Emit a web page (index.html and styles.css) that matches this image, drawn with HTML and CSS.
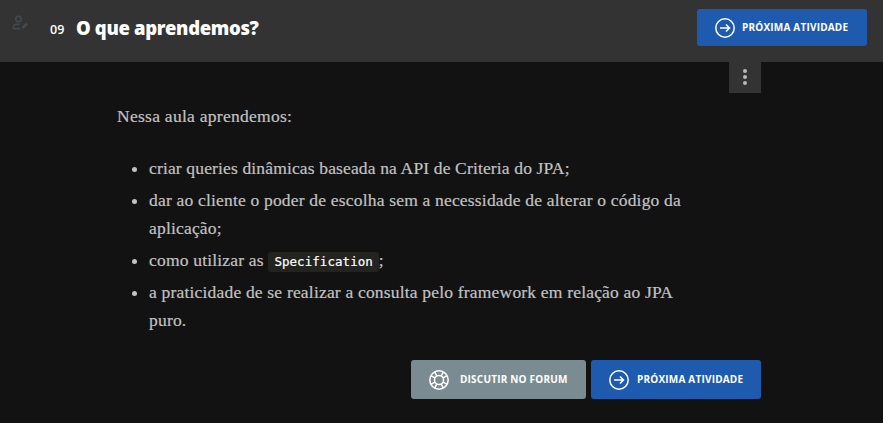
FILE: index.html
```html
<!DOCTYPE html>
<html lang="pt-BR">
<head>
<meta charset="utf-8">
<title>O que aprendemos?</title>
<link rel="stylesheet" href="styles.css">
</head>
<body>
<header class="header">
  <svg class="user-icon" viewBox="0 0 16 16" fill="none" stroke="currentColor" stroke-width="1.5"><circle cx="6" cy="4" r="2.8"/><path d="M7.5 13.7H1V12c0-1.800 1.400-2.800 3.400-2.800h3"/><path d="M9.500 13.500v-2l4-4 2 2-4 4z" fill="currentColor" stroke="none"/></svg>
  <h1 class="heading"><span class="number">09</span><span class="title">O que aprendemos?</span></h1>
  <a class="button next header-next">
    <svg class="icon" viewBox="0 0 20 20"><circle cx="10" cy="10" r="9.200"/><path d="M5 10h9.500M11 6.500l3.500 3.500-3.500 3.500"/></svg>
    <span>PRÓXIMA ATIVIDADE</span>
  </a>
</header>
<main class="content">
  <button class="more" aria-label="Mais opções"><i></i><i></i><i></i></button>
  <p class="intro">Nessa aula aprendemos:</p>
  <ul class="topics">
    <li>criar queries dinâmicas baseada na API de Criteria do JPA;</li>
    <li>dar ao cliente o poder de escolha sem a necessidade de alterar o código da<br>aplicação;</li>
    <li>como utilizar as <code>Specification</code>;</li>
    <li>a praticidade de se realizar a consulta pelo framework em relação ao JPA<br>puro.</li>
  </ul>
  <div class="actions">
    <a class="button forum">
      <svg class="icon" viewBox="0 0 20 20"><circle cx="10" cy="10" r="9.200"/><circle cx="10" cy="10" r="4.500"/><path d="M5.800 2.200l2 3.800M2.200 5.800l3.800 2M14.200 2.200l-2 3.800M17.800 5.800l-3.800 2M5.800 17.800l2-3.800M2.200 14.200l3.800-2M14.200 17.800l-2-3.800M17.800 14.200l-3.800-2"/></svg>
      <span>DISCUTIR NO FORUM</span>
    </a>
    <a class="button next">
      <svg class="icon" viewBox="0 0 20 20"><circle cx="10" cy="10" r="9.200"/><path d="M5 10h9.500M11 6.500l3.500 3.500-3.500 3.500"/></svg>
      <span>PRÓXIMA ATIVIDADE</span>
    </a>
  </div>
</main>
</body>
</html>
```
FILE: styles.css
```css
* { box-sizing: border-box; }
body {
  margin: 0;
  height: 423px;
  overflow: hidden;
  background: #121212;
  color: #c2c2c2;
  font-family: "Open Sans", sans-serif;
}
.header {
  display: flex;
  align-items: flex-start;
  height: 62px;
  padding: 9px 16px 0 12px;
  background: #333;
}
.user-icon { width: 17px; height: 16px; margin-top: 6px; color: #43494d; }
.heading {
  display: flex;
  align-items: baseline;
  flex: 1;
  margin: 5px 0 0 21px;
  color: #fff;
  line-height: 28px;
}
.number { width: 26px; font-size: 12.5px; font-weight: 600; line-height: 24px; position: relative; top: -1px; }
.title { font-size: 18.5px; font-weight: 800; letter-spacing: -0.35px; white-space: nowrap; }
.button {
  display: flex;
  align-items: center;
  height: 39px;
  padding: 0 18px;
  border-radius: 3px;
  color: #fff;
  font-size: 10px;
  font-weight: 700;
  letter-spacing: 0.2px;
  white-space: nowrap;
}
.button span { padding-bottom: 1px; }
.next { width: 170px; gap: 8px; background: #1e5aae; }
.header-next { height: 37px; gap: 7px; }
.header-next span { padding-bottom: 2px; }
.forum { width: 175px; gap: 11px; background: #7b8b92; }
.icon { flex: none; width: 20px; height: 20px; fill: none; stroke: currentColor; stroke-width: 1.5; }
.content { width: 644px; margin-left: 117px; }
.more {
  display: flex;
  flex-direction: column;
  align-items: center;
  justify-content: center;
  gap: 2px;
  width: 32px;
  height: 31px;
  margin: 0 0 0 auto;
  padding: 0 0 2px;
  border: 0;
  background: #333;
}
.more i { width: 4px; height: 4px; border-radius: 50%; background: #b2b9bd; }
.intro, .topics {
  font-family: "Liberation Serif", serif;
  font-size: 17.5px;
  line-height: 28px;
  letter-spacing: 0.19px;
  -webkit-text-stroke: 0.2px currentColor;
  white-space: nowrap;
}
.intro { margin: 9px 0 24px; letter-spacing: 0.28px; }
.topics { margin: 0; padding-left: 32px; }
.topics li { margin-bottom: 4px; }
.topics li:first-child { letter-spacing: 0.15px; }
.topics code {
  padding: 2px 6px 3px;
  border-radius: 3px;
  background: #23241f;
  color: #fff;
  font: 12.5px "DejaVu Sans Mono", monospace;
  letter-spacing: 0.05px;
}
.actions { display: flex; justify-content: flex-end; gap: 5px; margin-top: 26px; }
```
